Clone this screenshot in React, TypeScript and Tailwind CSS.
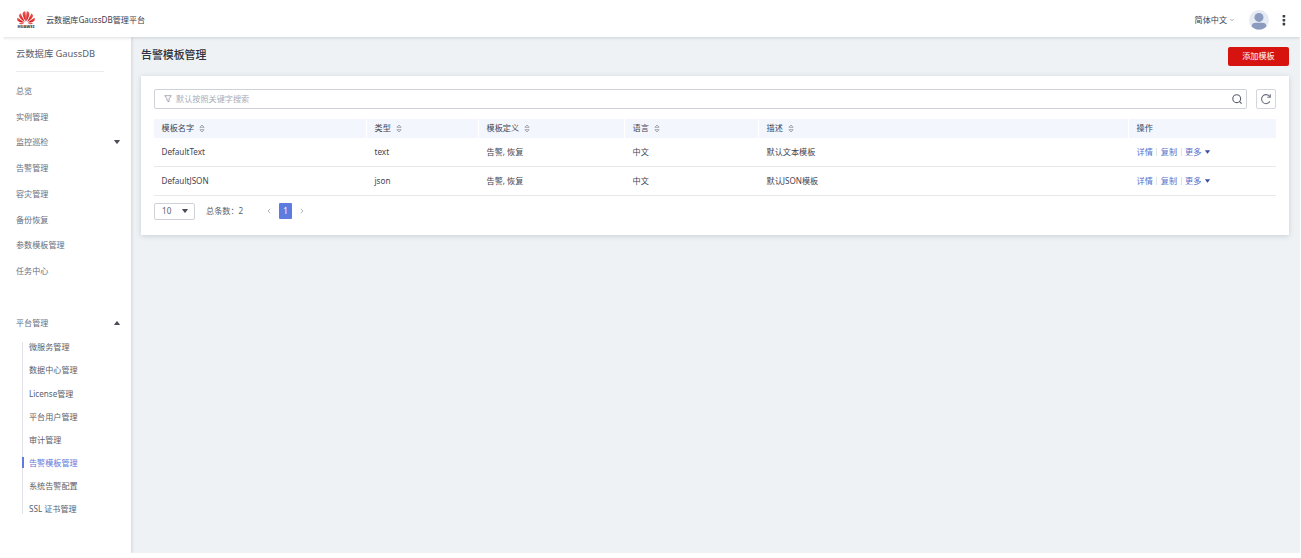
import React from 'react';
import { ChevronDown, ChevronLeft, ChevronRight } from 'lucide-react';
import { clsx } from 'clsx';

const navItems = [
  { name: '总览' },
  { name: '实例管理' },
  { name: '监控巡检', expandable: true },
  { name: '告警管理' },
  { name: '容灾管理' },
  { name: '备份恢复' },
  { name: '参数模板管理' },
  { name: '任务中心' },
];

const platformItems = [
  '微服务管理',
  '数据中心管理',
  'License管理',
  '平台用户管理',
  '审计管理',
  '告警模板管理',
  '系统告警配置',
  'SSL 证书管理',
];

const columns = ['模板名字', '类型', '模板定义', '语言', '描述'];

const templates = [
  { name: 'DefaultText', type: 'text', events: '告警, 恢复', lang: '中文', desc: '默认文本模板' },
  { name: 'DefaultJSON', type: 'json', events: '告警, 恢复', lang: '中文', desc: '默认JSON模板' },
];

const gridCols = 'grid grid-cols-[213px_112px_146px_134px_370px_1fr]';

function Caret({ up, className }: { up?: boolean; className?: string }) {
  return (
    <svg viewBox="0 0 6 4" className={clsx('h-1 w-1.5 shrink-0', up && 'rotate-180', className)}>
      <path d="M0.3 0h5.4q.4 0 .1.4L3.3 3.8q-.3.3-.6 0L.2.4Q-.1 0 .3 0z" fill="currentColor" />
    </svg>
  );
}

function SortIcon() {
  return (
    <svg viewBox="0 0 6 9" className="mt-px h-[9px] w-1.5 fill-none stroke-[#9095a0]" strokeWidth="0.8">
      <path d="M3 1 5.100 3.300H.9zM3 8 .9 5.700h4.200z" />
    </svg>
  );
}

function Logo() {
  return (
    <div className="flex w-5 flex-col items-center">
      <svg viewBox="0 0 36 27" className="h-[14px] w-[18px]">
        <defs>
          <linearGradient id="petal" x1="0" y1="0" x2="0" y2="1">
            <stop offset="0" stopColor="#ec5f55" />
            <stop offset="1" stopColor="#d40f16" />
          </linearGradient>
        </defs>
        <g fill="url(#petal)">
          <path d="M17.3 20.5C12.5 13 10.2 6.8 11.6 3.2 12.6 1 15 .4 16.5.2c1.2 5 1.5 13 .8 20.3z" />
          <path d="M18.7 20.5c4.8-7.5 7.1-13.7 5.7-17.3C23.4 1 21 .4 19.500.2c-1.2 5-1.5 13-.8 20.300z" />
          <path d="M15.6 21.3C8.6 17 4.2 12.8 4 9.2c0-2.5 1.8-4 3.3-4.8C9.6 9 13.2 16 15.6 21.3z" />
          <path d="M20.4 21.3c7-4.3 11.4-8.5 11.6-12.1 0-2.5-1.8-4-3.3-4.8C26.4 9 22.8 16 20.4 21.3z" />
          <path d="M14.8 22.5C8 23 2.8 21.5 1 18.5c-1-2-.8-4-.2-5.5C5 15.5 10.5 19 14.8 22.5z" />
          <path d="M21.2 22.5C28 23 33.2 21.5 35 18.5c1-2 .8-4 .2-5.5C31 15.5 25.5 19 21.2 22.5z" />
          <path d="M14.5 23.8C11 26.3 6.5 27.2 3.8 23.7z" />
          <path d="M21.5 23.8c3.5 2.5 8 3.4 10.7-.1z" />
        </g>
      </svg>
      <span className="text-[4px] leading-[4px] font-black text-[#444]">HUAWEI</span>
    </div>
  );
}

function Header() {
  return (
    <header className="relative z-10 flex h-[37px] shrink-0 items-center bg-white pt-[3px] shadow-[0_1px_3px_rgba(70,80,95,0.2)]">
      <div className="ml-[13px]">
        <Logo />
      </div>
      <span className="ml-[10px] text-[8.1px] text-[#3a404e]">云数据库GaussDB管理平台</span>
      <div className="ml-auto flex items-center pr-[14px]">
        <span className="text-[8.1px] text-[#3a404e]">简体中文</span>
        <ChevronDown className="ml-0.5 h-[6px] w-[6px] text-[#575d6c]" />
        <svg viewBox="0 0 20 20" className="ml-[14px] size-5">
          <circle cx="10" cy="10" r="10" fill="#e6eaf3" />
          <circle cx="10" cy="7.4" r="4.5" fill="#8a9bbe" />
          <path d="M2.5 16.2q.5-3.4 4.300-3.400h6.400q3.800 0 4.300 3.400A10 10 0 0 1 2.500 16.200z" fill="#8a9bbe" />
        </svg>
        <svg viewBox="0 0 4 12" className="ml-[13px] h-3 w-1 fill-[#3a3f4b]">
          <rect x=".6" y="1" width="2.6" height="2.6" rx=".6" />
          <rect x=".6" y="4.9" width="2.6" height="2.6" rx=".6" />
          <rect x=".6" y="8.8" width="2.6" height="2.6" rx=".6" />
        </svg>
      </div>
    </header>
  );
}

function Sidebar() {
  return (
    <aside className="z-[5] w-[128px] shrink-0 bg-white shadow-[1px_0_3px_rgba(70,80,95,0.18)]">
      <div className="mr-[27px] ml-[13px] flex h-[35px] items-center border-b border-[#e9ebef] text-[9.3px] text-[#575d6c]">
        云数据库 GaussDB
      </div>
      <nav className="mt-[6px] pr-[11px] pl-[13px] text-[8.1px] text-[#6a6f7c]">
        {navItems.map((item) => (
          <div key={item.name} className="flex h-[25.75px] items-center justify-between">
            {item.name}
            {item.expandable && <Caret className="text-[#4a4e58]" />}
          </div>
        ))}
        <div className="mt-[26px] flex h-[26px] items-center justify-between">
          平台管理
          <Caret up className="text-[#4a4e58]" />
        </div>
      </nav>
      <ul className="mt-[6px] ml-[19px] border-l border-[#dfe1e6] text-[8.1px] text-[#5a5f6c]">
        {platformItems.map((name) => {
          const isActive = name === '告警模板管理';
          return (
            <li key={name} className="flex h-[23.05px] items-start last:h-[11px]">
              <span
                className={clsx(
                  '-ml-px flex h-[11px] items-center',
                  isActive ? 'border-l-2 border-[#5e7ce0] pl-[5px] text-[#5b79dc]' : 'border-l border-transparent pl-[6px]',
                )}
              >
                {name}
              </span>
            </li>
          );
        })}
      </ul>
    </aside>
  );
}

function SearchBar() {
  return (
    <div className="flex gap-[9px]">
      <div className="flex h-5 flex-1 items-center rounded-[2px] border border-[#cfd2d8] pr-[3px] pl-[9px]">
        <svg viewBox="0 0 8 8" className="size-2 fill-none stroke-[#9296a0]" strokeWidth="0.8">
          <path d="M.7.7h6.600L5 3.800v3L3 5.600V3.800z" />
        </svg>
        <span className="ml-1 text-[8.15px] text-[#a9adb5]">默认按照关键字搜索</span>
        <svg viewBox="0 0 12 12" className="ml-auto size-3 fill-none stroke-[#575d6c]" strokeWidth="1.1">
          <circle cx="5.7" cy="5.7" r="3.9" />
          <path d="m8.400 8.400 2.200 2.300" />
        </svg>
      </div>
      <div className="flex size-5 items-center justify-center rounded-[2px] border border-[#d3d6dc]">
        <svg viewBox="0 0 12 12" className="size-3 fill-none stroke-[#6f7480]" strokeWidth="1.1">
          <path d="M9.900 8.400A4.500 4.500 0 1 1 9.700 3.500M10.300 1.300v3H7.300" />
        </svg>
      </div>
    </div>
  );
}

function TemplateTable() {
  return (
    <div className="mt-[10px] text-[8.15px] text-[#3f4552]">
      <div className={clsx(gridCols, 'h-[18.5px] bg-[#f3f6fc]')}>
        {columns.map((col) => (
          <div key={col} className="flex items-center gap-[5px] border-r border-white pl-[7.5px]">
            {col}
            <SortIcon />
          </div>
        ))}
        <div className="flex items-center pl-[7.5px]">操作</div>
      </div>
      {templates.map((t) => (
        <div
          key={t.name}
          className={clsx(gridCols, 'h-[29.25px] items-center border-b border-[#e6e8ec] pt-px *:pl-[7.5px]')}
        >
          <div>{t.name}</div>
          <div>{t.type}</div>
          <div>{t.events}</div>
          <div>{t.lang}</div>
          <div>{t.desc}</div>
          <div className="flex items-center text-[#5670cc]">
            <span>详情</span>
            <i className="mx-[3.5px] h-2 w-px bg-[#dfe1e6]" />
            <span>复制</span>
            <i className="mx-[3.5px] h-2 w-px bg-[#dfe1e6]" />
            <span>更多</span>
            <Caret className="ml-1 w-[5px] text-[#3f529f]" />
          </div>
        </div>
      ))}
    </div>
  );
}

function Pagination() {
  return (
    <div className="mt-[7px] flex h-4 items-center text-[8.15px] text-[#5a5f6c]">
      <div className="flex h-[17px] w-[41px] items-center justify-between rounded-[2px] border border-[#cfd2d8] pr-1.5 pl-[7px]">
        10
        <Caret className="text-[#4a4e58]" />
      </div>
      <span className="ml-[11px]">总条数：2</span>
      <ChevronLeft className="ml-[22px] size-2 text-[#8a8e99]" />
      <span className="ml-[6px] flex h-4 w-[13px] items-center justify-center rounded-[1px] bg-[#5e7ce0] text-white">1</span>
      <ChevronRight className="ml-[6px] size-2 text-[#8a8e99]" />
    </div>
  );
}

export default function App() {
  return (
    <div className="h-[558px] w-[1301px] bg-white pr-px pb-[5px] pl-[3px] font-['Noto_Sans','Noto_Sans_CJK_SC',sans-serif]">
      <div className="flex h-full flex-col overflow-hidden">
        <Header />
        <div className="flex min-h-0 flex-1">
          <Sidebar />
          <main className="flex-1 bg-[#eef2f5] pr-[11px] pl-[10px]">
            <div className="flex h-[39px] items-center justify-between">
              <h1 className="pb-[3px] text-[10.9px] font-medium text-[#2c3240]">告警模板管理</h1>
              <button className="h-[19px] w-[61px] rounded-[2px] bg-[#d71310] text-[8.15px] text-white">添加模板</button>
            </div>
            <section className="h-[159px] bg-white px-[13px] pt-[13px] shadow-[0_1px_5px_rgba(70,80,95,0.22)]">
              <SearchBar />
              <TemplateTable />
              <Pagination />
            </section>
          </main>
        </div>
      </div>
    </div>
  );
}
